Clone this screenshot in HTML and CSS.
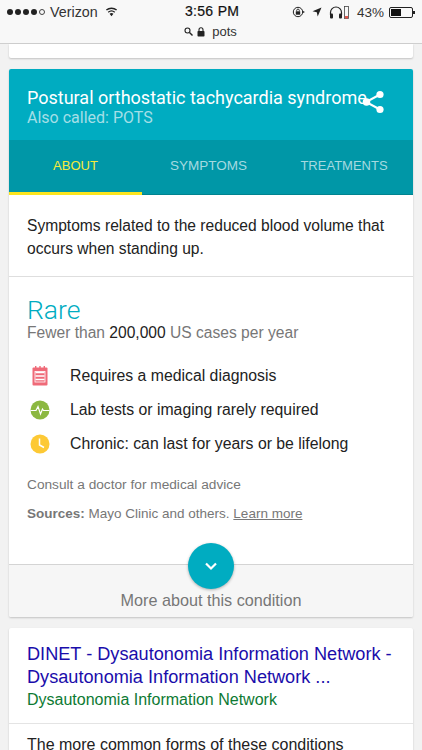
FILE: index.html
```html
<!DOCTYPE html>
<html lang="en">
<head>
<meta charset="utf-8">
<title>pots</title>
<link rel="stylesheet" href="styles.css">
</head>
<body>
<header class="chrome">
  <div class="status">
    <div class="status-left">
      <span class="dots"><i></i><i></i><i></i><i></i><i class="empty"></i></span>
      <span class="carrier">Verizon</span>
      <svg class="wifi" width="13" height="10" viewBox="0 0 14 10"><path d="M7 9.500 4.900 7a3.200 3.200 0 0 1 4.200 0zM3.900 5.800 3 4.700a6.200 6.200 0 0 1 8 0l-.9 1.100a4.800 4.800 0 0 0-6.200 0zM2 3.500 1 2.400a9.200 9.200 0 0 1 12 0l-1 1.100a7.700 7.700 0 0 0-10 0z" fill="#222"/></svg>
    </div>
    <div class="time">3:56 PM</div>
    <div class="status-right">
      <svg class="ic-lock" width="14" height="12" viewBox="0 0 14 12"><circle cx="6" cy="6" r="4.700" fill="none" stroke="#222" stroke-width="1"/><rect x="3.800" y="5.300" width="4.400" height="3.400" fill="#222"/><path d="M4.700 5.300V4.400a1.300 1.300 0 0 1 2.600 0v.9" fill="none" stroke="#222" stroke-width=".9"/><path d="M10.500 4.800 13 6l-2.500 1.200z" fill="#222"/></svg>
      <svg class="ic-loc" width="10" height="10" viewBox="0 0 10 10"><path d="M9.500.5 .5 4.300l4.300.9.900 4.300z" fill="#222"/></svg>
      <svg class="ic-head" width="14" height="13" viewBox="0 0 14 13"><path d="M1.500 9V6.500a5.500 5.500 0 0 1 11 0V9" fill="none" stroke="#222" stroke-width="1.200"/><rect x="1" y="7.500" width="3" height="5" rx="1" fill="#222"/><rect x="10" y="7.500" width="3" height="5" rx="1" fill="#222"/></svg>
      <svg class="ic-bud" width="5" height="13" viewBox="0 0 5 13"><rect x=".5" y=".5" width="4" height="12" fill="none" stroke="#444" stroke-width=".8"/><rect x="1" y="10" width="3" height="2.500" fill="#e0584f"/></svg>
      <span class="pct">43%</span>
      <span class="battery"><span class="battery-fill"></span></span>
    </div>
  </div>
  <div class="url">
    <svg width="9" height="9" viewBox="0 0 9 9"><circle cx="3.500" cy="3.500" r="2.500" fill="none" stroke="#222" stroke-width="1.100"/><path d="M5.500 5.500 8.500 8.500" stroke="#222" stroke-width="1.400"/></svg>
    <svg class="padlock" width="8" height="10" viewBox="0 0 8 10"><rect x=".5" y="4" width="7" height="5.500" rx=".8" fill="#222"/><path d="M2 4.500V2.800a2 2 0 0 1 4 0v1.700" fill="none" stroke="#222" stroke-width="1.100"/></svg>
    <span class="url-text">pots</span>
  </div>
</header>

<main class="page">
  <div class="card stub"></div>

  <section class="card condition">
    <div class="hero">
      <div class="hero-title">Postural orthostatic tachycardia syndrome</div>
      <div class="hero-sub">Also called: POTS</div>
      <svg class="share" width="26" height="26" viewBox="0 0 26 26"><path d="M20 5.500 6 13l14 7.500" fill="none" stroke="#fff" stroke-width="2"/><circle cx="20" cy="5.500" r="3.600" fill="#fff"/><circle cx="6.500" cy="13" r="3.800" fill="#fff"/><circle cx="20" cy="20.500" r="3.600" fill="#fff"/></svg>
    </div>
    <nav class="tabs">
      <div class="tab active">ABOUT</div>
      <div class="tab">SYMPTOMS</div>
      <div class="tab tab-narrow">TREATMENTS</div>
    </nav>
    <p class="summary">Symptoms related to the reduced blood volume that occurs when standing up.</p>
    <div class="details">
      <h2 class="rarity">Rare</h2>
      <div class="cases">Fewer than <span class="num">200,000</span> US cases per year</div>
      <ul class="facts">
        <li>
          <svg width="20" height="20" viewBox="0 0 20 20"><rect x="2.500" y="1.500" width="15" height="18" rx="1" fill="#ef6a78"/><rect x="5" y="0" width="1.400" height="3" fill="#ef6a78"/><rect x="9.300" y="0" width="1.400" height="3" fill="#ef6a78"/><rect x="13.600" y="0" width="1.400" height="3" fill="#ef6a78"/><path d="M5.500 6.500h9M5.500 10h9M5.500 13.500h9" stroke="#fff" stroke-width="1.400"/><rect x="5" y="5.500" width="10" height="10.500" fill="none" stroke="#fff" stroke-width=".8"/></svg>
          <span>Requires a medical diagnosis</span>
        </li>
        <li>
          <svg width="20" height="20" viewBox="0 0 20 20"><circle cx="10" cy="10" r="9.500" fill="#8cb841"/><path d="M0.500 10.500H6L8 6.500l2.500 7.500L12.500 9l1 1.500H19.500" fill="none" stroke="#fff" stroke-width="1.200"/></svg>
          <span>Lab tests or imaging rarely required</span>
        </li>
        <li>
          <svg width="20" height="20" viewBox="0 0 20 20"><circle cx="10" cy="10" r="9.500" fill="#fdc935"/><path d="M9.500 4.500V11l4.500 2.500" fill="none" stroke="#fff" stroke-width="1.500"/></svg>
          <span>Chronic: can last for years or be lifelong</span>
        </li>
      </ul>
      <div class="note">Consult a doctor for medical advice</div>
      <div class="sources"><b>Sources:</b> Mayo Clinic and others. <a>Learn more</a></div>
    </div>
    <div class="more">
      <span class="fab"><svg width="14" height="9" viewBox="0 0 14 9"><path d="M2 1.500 7 6.500 12 1.500" fill="none" stroke="#fff" stroke-width="2.200"/></svg></span>
      <span class="more-label">More about this condition</span>
    </div>
  </section>

  <section class="card result">
    <div class="result-head">
      <div class="result-title">DINET - Dysautonomia Information Network - Dysautonomia Information Network ...</div>
      <div class="result-site">Dysautonomia Information Network</div>
    </div>
    <p class="result-body">The more common forms of these conditions</p>
  </section>
</main>
</body>
</html>
```

FILE: styles.css
```css
* { box-sizing: border-box; }
html, body { margin: 0; height: 750px; overflow: hidden; }
body { background: #f2f2f2; font-family: "Liberation Sans", Arial, sans-serif; color: #222; }

.chrome { height: 44px; background: #f8f8f8; border-bottom: 1px solid #cfcfcf; display: flex; flex-direction: column; }
.status { height: 23px; display: flex; align-items: center; justify-content: space-between; padding: 1px 9px 0 7px; position: relative; }
.status-left, .status-right { display: flex; align-items: center; }
.dots { display: flex; gap: 2px; margin-right: 5px; }
.dots i { width: 6px; height: 6px; border-radius: 50%; background: #222; }
.dots i.empty { background: none; border: 1px solid #444; }
.carrier { font-size: 14.300px; color: #333; }
.wifi { margin-left: 7px; }
.time { position: absolute; left: 185px; top: 3px; font-size: 14px; color: #111; letter-spacing: .3px; -webkit-text-stroke: .2px #111; }
.ic-lock { margin-right: 6px; }
.ic-loc { margin-right: 7px; }
.ic-head { margin-right: 1px; }
.ic-bud { margin-right: 8px; }
.pct { font-size: 13.500px; color: #333; margin-right: 5px; }
.battery { width: 24px; height: 11px; border: 1px solid #222; border-radius: 2px; padding: 1px; position: relative; display: block; }
.battery::after { content: ""; position: absolute; right: -3px; top: 3px; width: 2px; height: 3px; background: #222; }
.battery-fill { display: block; width: 10px; height: 7px; background: #111; }
.url { display: flex; align-items: center; justify-content: center; gap: 3px; height: 17px; padding-right: 1px; }
.padlock { margin-left: 1px; }
.url-text { font-size: 13px; color: #333; margin-left: 4px; }

.page { padding: 0 9px; display: flex; flex-direction: column; }
.card { background: #fff; border-radius: 2px; box-shadow: 0 1px 2px rgba(0,0,0,.2); }
.stub { height: 14px; margin-bottom: 11px; border-radius: 0 0 2px 2px; }

.condition { margin-bottom: 11px; }
.hero { height: 71px; background: #00acc1; border-radius: 2px 2px 0 0; position: relative; padding: 18px 18px 0; color: #fff; }
.hero-title { font-family: Roboto, sans-serif; font-size: 18px; line-height: 21px; white-space: nowrap; }
.hero-sub { font-family: Roboto, sans-serif; font-size: 16px; line-height: 20px; color: #a4dfe7; }
.share { position: absolute; left: 351px; top: 20px; }
.tabs { height: 55px; background: #0097a7; border-bottom: 1px solid #00838f; display: grid; grid-template-columns: 133px 133px 138px; }
.tab { display: flex; align-items: center; justify-content: center; font-size: 13.500px; color: #a5dae0; padding-bottom: 4px; }
.tab-narrow { font-size: 13px; }
.tab.active { font-size: 13px; color: #f7ea3b; border-bottom: 3px solid #fce51f; margin-bottom: -1px; padding-bottom: 2px; }
.summary { margin: 0; padding: 19px 18px 11px; font-size: 15.600px; line-height: 23px; color: #222; border-bottom: 1px solid #dedede; height: 82px; }

.details { padding: 18px 18px 0; height: 287px; }
.rarity { margin: 0; font-family: "Roboto", sans-serif; font-weight: 300; font-size: 26.500px; line-height: 30px; color: #00acc1; }
.cases { font-size: 15.600px; line-height: 16px; color: #777; }
.cases .num { color: #222; }
.facts { list-style: none; margin: 18px 0 0; padding: 0; }
.facts li { display: flex; align-items: center; height: 34px; font-size: 15.800px; color: #222; }
.facts svg { margin-left: 3px; margin-right: 20px; }
.note { margin-top: 16px; font-size: 13.700px; line-height: 16px; color: #777; }
.sources { margin-top: 13px; font-size: 13.500px; line-height: 16px; color: #777; }
.sources a { text-decoration: underline; }

.more { height: 53px; background: #f6f6f6; border-top: 1px solid #d4d4d4; position: relative; display: flex; justify-content: center; align-items: flex-end; padding-bottom: 7px; border-radius: 0 0 2px 2px; }
.more-label { font-size: 16.200px; color: #777; }
.fab { position: absolute; left: 179px; top: -22px; width: 46px; height: 46px; border-radius: 50%; background: #00acc1; box-shadow: 0 1px 3px rgba(0,0,0,.3); display: flex; align-items: center; justify-content: center; }

.result-head { padding: 15px 18px 12px; border-bottom: 1px solid #e4e4e4; }
.result-title { font-size: 18.150px; line-height: 23px; color: #1a0dab; }
.result-site { font-size: 16px; line-height: 22px; color: #0d7a33; }
.result-body { margin: 0; padding: 11px 18px; font-size: 16px; line-height: 20px; color: #222; }
```
